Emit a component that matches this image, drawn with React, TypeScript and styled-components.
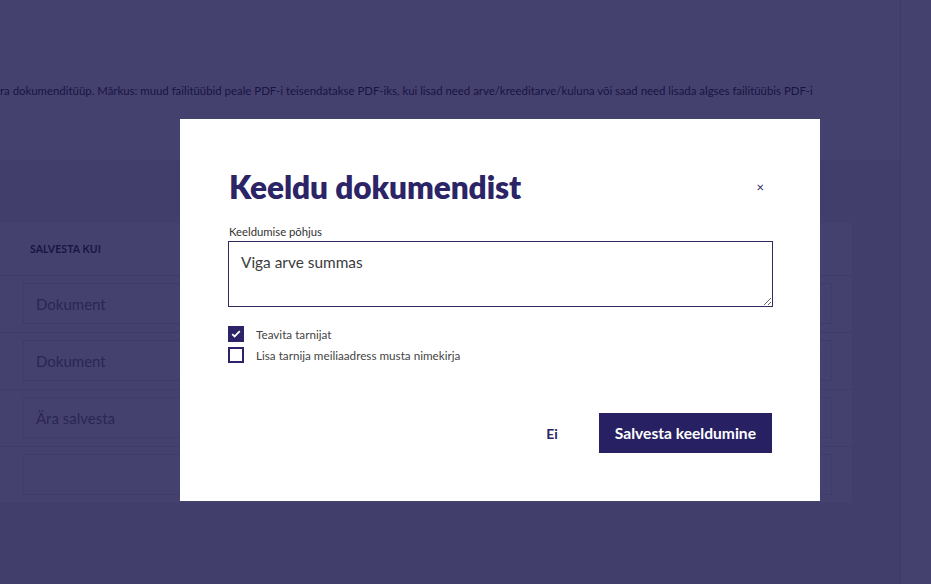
import React, { useState } from 'react';
import styled, { createGlobalStyle } from 'styled-components';

const GlobalStyle = createGlobalStyle`
  html, body {
    margin: 0;
    padding: 0;
    font-family: Lato, "Open Sans", sans-serif;
    background: #f0f0f0;
  }
`;

const Page = styled.div`
  display: flex;
  width: 100%;
  height: 584px;
  overflow: hidden;
`;

const Main = styled.div`
  width: 900px;
  flex-shrink: 0;
  display: flex;
  flex-direction: column;
`;

const Aside = styled.div`
  flex: 1;
  background: #fff;
  border-left: 1px solid #d6d6de;
`;

const TopCard = styled.div`
  height: 160px;
  background: #fff;
  display: flex;
  align-items: center;
  padding-top: 20px;
  box-sizing: border-box;
`;

const Note = styled.p`
  margin: 0;
  font-size: 11.4px;
  color: #222;
  white-space: nowrap;
`;

const TableCard = styled.div`
  margin-top: 63px;
  width: 852px;
  background: #fff;
`;

const HeaderRow = styled.div`
  height: 52px;
  display: flex;
  align-items: center;
  padding-left: 30px;
  font-size: 10.5px;
  font-weight: 700;
  text-transform: uppercase;
  color: #222;
  letter-spacing: 0.1px;
`;

const Row = styled.div`
  height: 57px;
  border-top: 1px solid #e3e3e8;
  box-sizing: border-box;
  padding: 7px 20px 0 23px;
`;

const Field = styled.div`
  height: 41px;
  border: 1px solid #e6e6ea;
  box-sizing: border-box;
  display: flex;
  align-items: center;
  justify-content: space-between;
  padding: 0 10px 0 12px;
  font-size: 15px;
  color: #777;
`;

const Overlay = styled.div`
  position: fixed;
  inset: 0;
  background: rgba(23, 18, 74, 0.8);
  display: flex;
  align-items: flex-start;
  padding: 119px 0 0 180px;
`;

const Modal = styled.div`
  width: 640px;
  height: 382px;
  box-sizing: border-box;
  background: #fff;
  padding: 48px 48px 48px 49px;
  display: flex;
  flex-direction: column;
`;

const ModalHeader = styled.div`
  display: flex;
  align-items: center;
  justify-content: space-between;
  height: 40px;
`;

const Title = styled.h2`
  margin: 0;
  font-size: 31.6px;
  font-weight: 800;
  color: #2b2466;
  letter-spacing: -0.1px;
`;

const Close = styled.button`
  border: none;
  background: none;
  padding: 0 8px 0 0;
  font-family: inherit;
  font-size: 13px;
  color: #2b2466;
  cursor: pointer;
`;

const Label = styled.label`
  margin-top: 18px;
  font-size: 11.3px;
  color: #333;
`;

const TextArea = styled.textarea`
  margin-top: 3px;
  margin-left: -1px;
  width: 545px;
  height: 66px;
  box-sizing: border-box;
  border: 1px solid #2e2a5c;
  border-radius: 0;
  padding: 11px 12px;
  font-family: inherit;
  font-size: 15.4px;
  color: #3c3c3c;
  resize: vertical;
  outline: none;
`;

const Checks = styled.div`
  margin-top: 19px;
  display: flex;
  flex-direction: column;
  gap: 5px;
`;

const CheckRow = styled.label`
  display: flex;
  align-items: center;
  gap: 12px;
  font-size: 11.7px;
  color: #444;
  cursor: pointer;
  margin-left: -1px;
`;

const Box = styled.span<{ checked: boolean }>`
  width: 16px;
  height: 16px;
  box-sizing: border-box;
  border: 2px solid #2b2466;
  background: ${({ checked }) => (checked ? '#2b2466' : '#fff')};
  display: flex;
  align-items: center;
  justify-content: center;
`;

const Footer = styled.div`
  margin-top: auto;
  display: flex;
  justify-content: flex-end;
  align-items: center;
  gap: 25px;
`;

const GhostButton = styled.button`
  border: none;
  background: none;
  padding: 0 16px;
  font-family: inherit;
  font-size: 14px;
  font-weight: 700;
  color: #2b2466;
  cursor: pointer;
`;

const PrimaryButton = styled.button`
  border: none;
  background: #272063;
  color: #fff;
  height: 40px;
  padding: 0 16px;
  font-family: inherit;
  font-size: 15.6px;
  font-weight: 700;
  cursor: pointer;
`;

const Chevron = () => (
  <svg width="9" height="6" viewBox="0 0 9 6">
    <path d="M1 1l3.5 3.5L8 1" stroke="#444" strokeWidth="1.3" fill="none" />
  </svg>
);

const Check = () => (
  <svg width="10" height="8" viewBox="0 0 10 8">
    <path d="M1.2 4.2l2.4 2.3L8.8 1.2" stroke="#fff" strokeWidth="1.8" fill="none" />
  </svg>
);

const rows = [
  { value: 'Dokument', select: true },
  { value: 'Dokument', select: true },
  { value: 'Ära salvesta', select: false },
  { value: '', select: false },
];

export default function App() {
  const [reason, setReason] = useState('Viga arve summas');
  const [notify, setNotify] = useState(true);
  const [blacklist, setBlacklist] = useState(false);

  return (
    <>
      <GlobalStyle />
      <Page>
        <Main>
          <TopCard>
            <Note>
              ra dokumenditüüp. Märkus: muud failitüübid peale PDF-i teisendatakse PDF-iks, kui lisad need arve/kreeditarve/kuluna või saad need lisada algses failitüübis PDF-i
            </Note>
          </TopCard>
          <TableCard>
            <HeaderRow>Salvesta kui</HeaderRow>
            {rows.map((r, i) => (
              <Row key={i}>
                <Field>
                  <span>{r.value}</span>
                  {r.select && <Chevron />}
                </Field>
              </Row>
            ))}
          </TableCard>
        </Main>
        <Aside />
      </Page>
      <Overlay>
        <Modal>
          <ModalHeader>
            <Title>Keeldu dokumendist</Title>
            <Close>×</Close>
          </ModalHeader>
          <Label htmlFor="reason">Keeldumise põhjus</Label>
          <TextArea id="reason" value={reason} onChange={e => setReason(e.target.value)} />
          <Checks>
            <CheckRow onClick={() => setNotify(!notify)}>
              <Box checked={notify}>{notify && <Check />}</Box>
              Teavita tarnijat
            </CheckRow>
            <CheckRow onClick={() => setBlacklist(!blacklist)}>
              <Box checked={blacklist}>{blacklist && <Check />}</Box>
              Lisa tarnija meiliaadress musta nimekirja
            </CheckRow>
          </Checks>
          <Footer>
            <GhostButton>Ei</GhostButton>
            <PrimaryButton>Salvesta keeldumine</PrimaryButton>
          </Footer>
        </Modal>
      </Overlay>
    </>
  );
}
